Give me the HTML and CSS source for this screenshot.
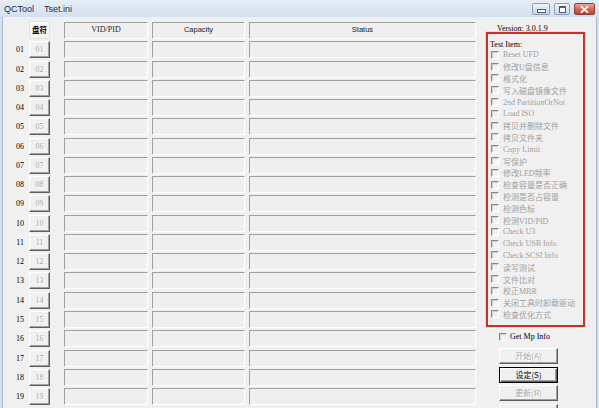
FILE: index.html
```html
<!DOCTYPE html>
<html lang="zh-CN">
  <head>
    <meta charset="utf-8">
    <title>QCTool</title>
    <link rel="stylesheet" href="styles.css">
  </head>
  <body>
    <div class="window">
      <div class="titlebar">
        <span class="title">QCTool<span class="file">Tset.ini</span></span>
        <div class="controls">
          <span class="ctl min"><i></i></span>
          <span class="ctl max"><i></i></span>
          <span class="ctl close">
            <svg width="9" height="7" viewBox="0 0 9 7"><path d="M1.5 0.8 L7.5 6.2 M7.5 0.8 L1.5 6.2" stroke="#fff" stroke-width="1.8" stroke-linecap="round"/></svg>
          </span>
        </div>
      </div>

      <div class="client">
        <div class="table">
          <div class="row head">
            <span class="num"></span>
            <span class="drive-head">盘符</span>
            <div class="cell"><span class="caption serif">VID/PID</span></div>
            <div class="cell"><span class="caption">Capacity</span></div>
            <div class="cell"><span class="caption">Status</span></div>
          </div>
          <div class="row"><span class="num">01</span><button class="drive" disabled>01</button><div class="cell"></div><div class="cell"></div><div class="cell"></div></div>
          <div class="row"><span class="num">02</span><button class="drive" disabled>02</button><div class="cell"></div><div class="cell"></div><div class="cell"></div></div>
          <div class="row"><span class="num">03</span><button class="drive" disabled>03</button><div class="cell"></div><div class="cell"></div><div class="cell"></div></div>
          <div class="row"><span class="num">04</span><button class="drive" disabled>04</button><div class="cell"></div><div class="cell"></div><div class="cell"></div></div>
          <div class="row"><span class="num">05</span><button class="drive" disabled>05</button><div class="cell"></div><div class="cell"></div><div class="cell"></div></div>
          <div class="row"><span class="num">06</span><button class="drive" disabled>06</button><div class="cell"></div><div class="cell"></div><div class="cell"></div></div>
          <div class="row"><span class="num">07</span><button class="drive" disabled>07</button><div class="cell"></div><div class="cell"></div><div class="cell"></div></div>
          <div class="row"><span class="num">08</span><button class="drive" disabled>08</button><div class="cell"></div><div class="cell"></div><div class="cell"></div></div>
          <div class="row"><span class="num">09</span><button class="drive" disabled>09</button><div class="cell"></div><div class="cell"></div><div class="cell"></div></div>
          <div class="row"><span class="num">10</span><button class="drive" disabled>10</button><div class="cell"></div><div class="cell"></div><div class="cell"></div></div>
          <div class="row"><span class="num">11</span><button class="drive" disabled>11</button><div class="cell"></div><div class="cell"></div><div class="cell"></div></div>
          <div class="row"><span class="num">12</span><button class="drive" disabled>12</button><div class="cell"></div><div class="cell"></div><div class="cell"></div></div>
          <div class="row"><span class="num">13</span><button class="drive" disabled>13</button><div class="cell"></div><div class="cell"></div><div class="cell"></div></div>
          <div class="row"><span class="num">14</span><button class="drive" disabled>14</button><div class="cell"></div><div class="cell"></div><div class="cell"></div></div>
          <div class="row"><span class="num">15</span><button class="drive" disabled>15</button><div class="cell"></div><div class="cell"></div><div class="cell"></div></div>
          <div class="row"><span class="num">16</span><button class="drive" disabled>16</button><div class="cell"></div><div class="cell"></div><div class="cell"></div></div>
          <div class="row"><span class="num">17</span><button class="drive" disabled>17</button><div class="cell"></div><div class="cell"></div><div class="cell"></div></div>
          <div class="row"><span class="num">18</span><button class="drive" disabled>18</button><div class="cell"></div><div class="cell"></div><div class="cell"></div></div>
          <div class="row"><span class="num">19</span><button class="drive" disabled>19</button><div class="cell"></div><div class="cell"></div><div class="cell"></div></div>
        </div>

        <div class="side">
          <div class="version">Version: 3.0.1.9</div>
          <div class="test-box">
            <div class="test-title">Test Item:</div>
            <ul class="items">
              <li><i class="check"></i>Reset UFD</li>
              <li><i class="check"></i>修改U盘信息</li>
              <li><i class="check"></i>格式化</li>
              <li><i class="check"></i>写入磁盘镜像文件</li>
              <li><i class="check"></i>2nd PartitionOrNot</li>
              <li><i class="check"></i>Load ISO</li>
              <li><i class="check"></i>拷贝并删除文件</li>
              <li><i class="check"></i>拷贝文件夹</li>
              <li><i class="check"></i>Copy Limit</li>
              <li><i class="check"></i>写保护</li>
              <li><i class="check"></i>修改LED频率</li>
              <li><i class="check"></i>检查容量是否正确</li>
              <li><i class="check"></i>检测是否占容量</li>
              <li><i class="check"></i>检测色标</li>
              <li><i class="check"></i>检测VID/PID</li>
              <li><i class="check"></i>Check U3</li>
              <li><i class="check"></i>Check USB Info</li>
              <li><i class="check"></i>Check SCSI Info</li>
              <li><i class="check"></i>读写测试</li>
              <li><i class="check"></i>文件比对</li>
              <li><i class="check"></i>校正MBR</li>
              <li><i class="check"></i>关闭工具时卸载驱动</li>
              <li><i class="check"></i>检查优化方式</li>
            </ul>
          </div>
          <div class="mpinfo"><i class="check"></i>Get Mp Info</div>
          <div class="actions">
            <button class="btn" disabled>开始(<u>A</u>)</button>
            <button class="btn default">设定(<u>S</u>)</button>
            <button class="btn" disabled>更新(<u>R</u>)</button>
            <button class="btn" disabled>停止(<u>P</u>)</button>
          </div>
        </div>
      </div>
    </div>
  </body>
</html>
```

FILE: styles.css
```css
html, body {
  margin: 0;
  padding: 0;
}

body {
  width: 599px;
  height: 408px;
  overflow: hidden;
  font-family: "Liberation Serif", "Noto Sans CJK SC", serif;
  font-size: 8px;
  color: #000;
  background: #d9e4f1;
}

.window {
  height: 408px;
  display: flex;
  flex-direction: column;
  padding: 0 2px 0 2px;
  background: linear-gradient(#e6eef7, #d3e0ef 17px, #d3e0ef);
}

/* title bar */

.titlebar {
  height: 17px;
  flex: none;
  display: flex;
  align-items: center;
  justify-content: space-between;
  padding: 0 2px 0 2px;
}

.title {
  font-family: "Liberation Sans", sans-serif;
  font-size: 9px;
  color: #1e2a3a;
  padding-top: 1px;
}

.title .file {
  margin-left: 10px;
}

.controls {
  display: flex;
  gap: 4px;
  align-self: flex-start;
  margin-top: 3px;
}

.ctl {
  height: 12px;
  box-sizing: border-box;
  border: 1px solid #8aa0bb;
  border-radius: 2px;
  background: linear-gradient(#f1f5fa, #d9e3ef 50%, #c9d6e6);
  display: flex;
  align-items: center;
  justify-content: center;
}

.ctl.min { width: 18px; }
.ctl.max { width: 16px; }

.ctl.min i {
  width: 7px;
  height: 2px;
  margin-top: 4px;
  border: 1px solid #4b5d75;
  background: #fff;
}

.ctl.max i {
  width: 5px;
  height: 4px;
  border: 1px solid #4b5d75;
  border-top-width: 2px;
  background: #fff;
}

.ctl.close {
  width: 21px;
  border-color: #8e3b35;
  background: linear-gradient(#e9a99c, #d4675a 50%, #c24536);
}

/* client area */

.client {
  flex: 1;
  display: flex;
  background: #f0f0f0;
  border-left: 1px solid #aab8c9;
  border-right: 1px solid #aab8c9;
  overflow: hidden;
}

.table {
  width: 473px;
  flex: none;
  display: flex;
  flex-direction: column;
  row-gap: 2.28px;
  padding-top: 5px;
}

.row {
  display: grid;
  grid-template-columns: 22px 31px 84px 93px 227px;
  column-gap: 4px;
  height: 17px;
  flex: none;
}

.num {
  text-align: right;
  padding-right: 1px;
  line-height: 17px;
}

.cell {
  box-sizing: border-box;
  border-top: 1px solid #a0a0a0;
  border-left: 1px solid #a0a0a0;
  border-bottom: 1px solid #fff;
  border-right: 1px solid #fff;
  background: #efefef;
  text-align: center;
}

.caption {
  display: block;
  padding-top: 2px;
  line-height: 9px;
  font-family: "Liberation Sans", sans-serif;
  font-size: 7.5px;
  color: #222;
}

.caption.serif {
  font-family: "Liberation Serif", serif;
  font-size: 8px;
}

.drive-head {
  width: 21px;
  height: 18px;
  margin-top: -1px;
  box-sizing: border-box;
  border: 1px solid #e2e2e2;
  background: linear-gradient(#fbfbfb, #f3f3f3);
  font-family: "Noto Sans CJK SC", sans-serif;
  font-weight: bold;
  font-size: 7.5px;
  line-height: 16px;
  text-align: center;
}

.drive {
  width: 21px;
  height: 17px;
  padding: 0;
  margin: 0;
  box-sizing: border-box;
  font: inherit;
  color: #a8a8a8;
  background: #f0f0f0;
  border: 1px solid;
  border-color: #fff #5e5e5e #5e5e5e #fff;
  box-shadow: inset -1px -1px #a0a0a0;
  text-shadow: 1px 1px #fff;
}

/* right panel */

.side {
  flex: 1;
  padding-left: 10px;
}

.version {
  margin: 7px 0 0 11px;
  height: 9px;
  line-height: 9px;
}

.test-box {
  width: 99px;
  height: 295px;
  box-sizing: border-box;
  margin-top: -1px;
  border: 2px solid #c9302a;
  box-shadow: 0 0 1px rgba(120, 20, 20, 0.5);
  padding: 6px 0 0 2px;
}

.test-title {
  line-height: 9px;
  height: 9px;
}

.items {
  list-style: none;
  margin: 0;
  padding: 0;
}

.items li {
  height: 11.8px;
  display: flex;
  align-items: center;
  padding-left: 1px;
  color: #a0a0a0;
  white-space: nowrap;
}

.check {
  width: 8px;
  height: 8px;
  flex: none;
  box-sizing: border-box;
  margin-right: 4px;
  border: 1px solid;
  border-color: #8a8a8a #fff #fff #8a8a8a;
  box-shadow: inset 1px 1px #cfcfcf;
  background: #f2f2f2;
}

.mpinfo {
  display: flex;
  align-items: center;
  height: 13px;
  margin: 3px 0 0 13px;
}

.mpinfo .check {
  margin-right: 3px;
}

.actions {
  display: flex;
  flex-direction: column;
  row-gap: 2.5px;
  margin: 5px 0 0 13px;
}

.btn {
  width: 59px;
  height: 16px;
  padding: 0;
  margin: 0;
  box-sizing: border-box;
  font-family: "Noto Sans CJK SC", sans-serif;
  font-size: 8px;
  line-height: 12px;
  color: #a8a8a8;
  background: #f0f0f0;
  border: 1px solid;
  border-color: #fff #5e5e5e #5e5e5e #fff;
  box-shadow: inset -1px -1px #a0a0a0;
  text-shadow: 1px 1px #fff;
}

.btn u {
  text-decoration: none;
}

.btn.default {
  color: #000;
  text-shadow: none;
  border: 1px solid #000;
  box-shadow: inset 1px 1px #fff, inset -1px -1px #5e5e5e, inset -2px -2px #a0a0a0;
}
```
